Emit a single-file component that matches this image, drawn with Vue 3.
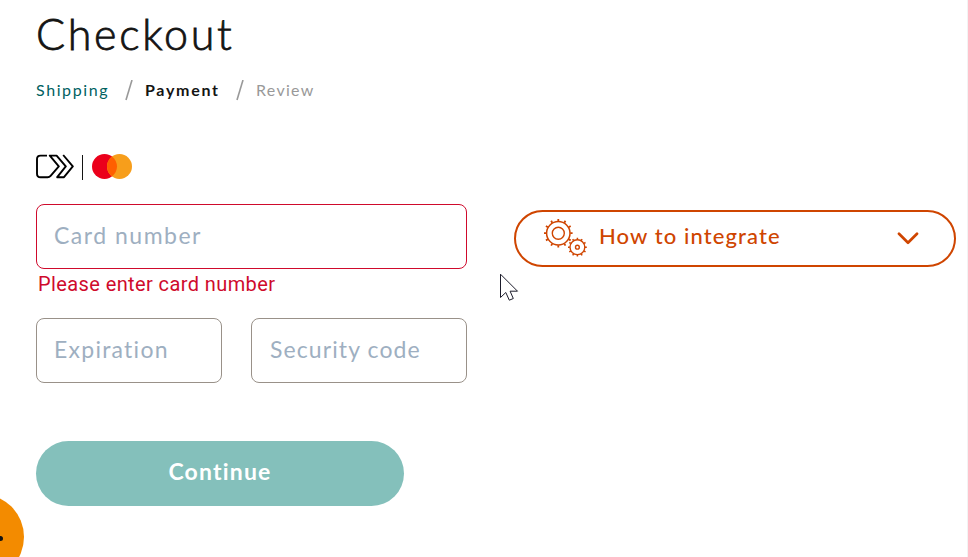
<script setup>
const steps = [
  { label: 'Shipping', state: 'done' },
  { label: 'Payment', state: 'current' },
  { label: 'Review', state: 'next' },
]

// Short radial strokes that form the teeth of a gear.
function teeth(cx, cy, inner, outer, count) {
  let d = ''
  for (let i = 0; i < count; i++) {
    const a = (i * 2 * Math.PI) / count
    const c = Math.cos(a)
    const s = Math.sin(a)
    d += `M${(cx + inner * c).toFixed(2)} ${(cy + inner * s).toFixed(2)}L${(cx + outer * c).toFixed(2)} ${(cy + outer * s).toFixed(2)}`
  }
  return d
}
const bigTeeth = teeth(15.3, 14.2, 12, 14.3, 12)
const smallTeeth = teeth(34.4, 28.2, 7.6, 9.4, 12)
</script>

<template>
  <div class="page">
    <main class="checkout">
      <h1 class="title"><span>Checkout</span></h1>
      <nav class="steps">
        <template v-for="(step, i) in steps" :key="step.label">
          <svg v-if="i > 0" class="slash" width="8" height="21" viewBox="0 0 8 21">
            <path d="M7 0 1 20" fill="none" stroke="#999" stroke-width="1.6" />
          </svg>
          <span :class="['step', step.state]">{{ step.label }}</span>
        </template>
      </nav>

      <div class="brands">
        <svg width="38" height="26" viewBox="0 0 38 26">
          <g fill="none" stroke="#000" stroke-width="1.9" stroke-linejoin="round">
            <path d="M11 1.6H4.5Q1 1.6 1 5.1V19.7Q1 23.2 4.5 23.2H11.6Q13.4 23.2 14.6 21.8L22.8 12.4L13.8 1.6H20.6L29.8 12.4L21.2 23.2H28L36.8 12.4L27.2 1" />
          </g>
        </svg>
        <span class="divider"></span>
        <svg width="40" height="26" viewBox="0 0 40 26">
          <circle cx="12.5" cy="12.5" r="12.5" fill="#eb001b" />
          <circle cx="27.5" cy="12.5" r="12.5" fill="#f79e1b" />
          <path d="M20 2.5A12.5 12.5 0 0 1 20 22.5A12.5 12.5 0 0 1 20 2.5Z" fill="#ff5f00" />
        </svg>
      </div>

      <div class="field invalid"><span class="card">Card number</span></div>
      <p class="error"><span>Please enter card number</span></p>
      <div class="row">
        <div class="field expiration"><span>Expiration</span></div>
        <div class="field security"><span>Security code</span></div>
      </div>
      <button class="continue"><span>Continue</span></button>
    </main>

    <aside class="side">
      <button class="integrate">
        <svg class="gears" width="44" height="40" viewBox="0 0 44 40">
          <g fill="none" stroke="#cf4500">
            <circle cx="15.3" cy="14.2" r="11.7" stroke-width="1.5" />
            <circle cx="15.3" cy="14.2" r="6" stroke-width="1.4" />
            <path :d="bigTeeth" stroke-width="1.8" />
            <circle cx="34.4" cy="28.2" r="7.4" fill="#fff" stroke-width="1.4" />
            <circle cx="34.4" cy="28.2" r="1.9" stroke-width="1.4" />
            <path :d="smallTeeth" stroke-width="1.5" />
          </g>
        </svg>
        <span class="integrate-label">How to integrate</span>
        <svg class="chevron" width="22" height="14" viewBox="0 0 22 14">
          <path d="M2 1.8 11 10.7 20 1.8" fill="none" stroke="#cf4500" stroke-width="2.7" stroke-linecap="round" stroke-linejoin="round" />
        </svg>
      </button>
    </aside>

    <div class="bubble"><i></i></div>
    <svg class="cursor" width="20" height="29" viewBox="0 0 20 29">
      <path d="M.5 1.2V24.5L5.8 19.5L9.3 27.2L13.3 25.5L10.1 18.2H17.5Z" fill="#fff" stroke="#1c1c2b" stroke-width="1" />
    </svg>
  </div>
</template>

<style>
body { margin: 0; background: #fff; overflow: hidden; }
</style>

<style scoped>
.page {
  position: relative;
  box-sizing: border-box;
  width: 968px;
  height: 557px;
  display: flex;
  align-items: flex-start;
  gap: 47px;
  padding-left: 36px;
  border-right: 1px solid #f3f3f3;
  overflow: hidden;
  background: #fff;
  font-family: Lato, sans-serif;
}
.checkout { width: 431px; display: flex; flex-direction: column; }
.title {
  margin: 0;
  height: 78px;
  line-height: 67px;
  font-size: 43px;
  font-weight: 300;
  letter-spacing: 2.7px;
  color: #141413;
  -webkit-text-stroke: 0.8px #141413;
}
.steps {
  height: 24px;
  display: flex;
  align-items: center;
  font-size: 16px;
  line-height: 24px;
  letter-spacing: 1.6px;
  white-space: nowrap;
}
.step { flex: none; }
.done { width: 89px; color: #00615f; }
.current { width: 91px; color: #141413; font-weight: 700; letter-spacing: 1.7px; }
.next { color: #999; letter-spacing: 1.3px; }
.slash { flex: none; margin-right: 12px; }
.brands {
  height: 26px;
  margin-top: 52px;
  display: flex;
  align-items: center;
}
.divider { width: 1px; height: 25px; margin: 0 9px 0 8px; background: #141413; }
.field {
  box-sizing: border-box;
  height: 65px;
  padding-left: 17px;
  border: 1px solid #999189;
  border-radius: 8px;
  font-size: 23px;
  line-height: 60px;
  letter-spacing: 1.25px;
  color: #9eafc1;
  white-space: nowrap;
}
.invalid { margin-top: 24px; border-color: #cf0a2c; letter-spacing: 1.5px; }
.error {
  margin: 0;
  padding-left: 2px;
  height: 49px;
  font: 20px/31px Roboto, sans-serif;
  letter-spacing: 0.4px;
  color: #cf0a2c;
}
.row { display: flex; gap: 29px; }
.expiration { width: 186px; }
.security { width: 216px; padding-left: 18px; letter-spacing: 1.1px; }
.continue {
  width: 368px;
  height: 65px;
  margin-top: 58px;
  padding: 0 0 4px;
  border: 0;
  border-radius: 33px;
  background: #84c0bb;
  color: #fff;
  font: 700 23px/61px Lato, sans-serif;
  letter-spacing: 1.2px;
}
.side { width: 442px; padding-top: 210px; }
.integrate {
  box-sizing: border-box;
  width: 442px;
  height: 57px;
  padding: 0 35px 0 27px;
  display: flex;
  align-items: center;
  border: 2px solid #cf4500;
  border-radius: 29px;
  background: #fff;
  color: #cf4500;
}
.integrate-label {
  flex: 1;
  margin-left: 12px;
  padding-bottom: 6px;
  font: 500 22px/47px Lato, sans-serif;
  letter-spacing: 1.1px;
  text-align: left;
}
.bubble {
  position: absolute;
  left: -62px;
  top: 494px;
  width: 86px;
  height: 86px;
  border-radius: 50%;
  background: #f38b00;
}
.bubble i {
  position: absolute;
  left: 60px;
  top: 42px;
  width: 5px;
  height: 5px;
  border-radius: 50%;
  background: #141413;
}
.cursor { position: absolute; left: 500px; top: 273px; }
</style>
